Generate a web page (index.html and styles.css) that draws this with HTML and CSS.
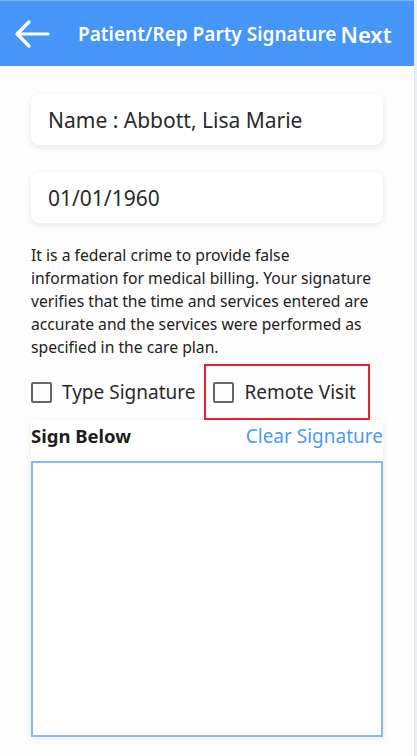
FILE: index.html
```html
<!DOCTYPE html>
<html>
<head>
<meta charset="utf-8">
<link rel="stylesheet" href="styles.css">
</head>
<body>
<div class="app">
  <header class="topbar">
    <svg class="back" width="38" height="30" viewBox="0 0 38 30"><path d="M35 15H4M16 3L4 15l12 12" fill="none" stroke="#fff" stroke-width="3.2" stroke-linecap="round" stroke-linejoin="round"/></svg>
    <span class="title">Patient/Rep Party Signature</span>
    <span class="next">Next</span>
  </header>
  <main class="content">
    <div class="card">Name : Abbott, Lisa Marie</div>
    <div class="card">01/01/1960</div>
    <p class="notice">It is a federal crime to provide false information for medical billing. Your signature verifies that the time and services entered are accurate and the services were performed as specified in the care plan.</p>
    <div class="checks">
      <label class="check"><span class="box"></span>Type Signature</label>
      <label class="check remote"><span class="box"></span>Remote Visit</label>
    </div>
    <section class="sign">
      <div class="sign-head"><span class="sign-title">Sign Below</span><span class="clear">Clear Signature</span></div>
      <div class="pad"></div>
    </section>
  </main>
</div>
<div class="edge"></div>
</body>
</html>
```
FILE: styles.css
```css
html, body { margin: 0; padding: 0; }
body {
  width: 417px;
  height: 756px;
  overflow: hidden;
  display: flex;
  background: #fdfdfd;
  font-family: "Noto Sans", sans-serif;
  color: #222;
}
.app { width: 414px; flex: none; }
.edge { flex: 1; background: #e9eff5; border-left: 1px solid #dfe8f1; }
.topbar {
  height: 66px;
  background: #4596f8;
  display: flex;
  align-items: center;
  color: #fff;
  box-sizing: border-box;
  border-top: 1px solid #7fb6fb;
}
.back { margin-left: 13px; flex: none; }
.title { margin-left: 27px; font-size: 19px; font-weight: 600; }
.next { margin-left: 4px; font-size: 22px; font-weight: 600; }
.content { padding: 28px 31px 0 31px; }
.card {
  height: 51px;
  background: #fff;
  border-radius: 8px;
  box-shadow: 0 2px 6px rgba(0,0,0,0.09);
  display: flex;
  align-items: center;
  padding-left: 17px;
  font-size: 21px;
  color: #2a2a2a;
  margin-bottom: 27px;
}
.notice {
  margin: 0;
  width: 346px;
  font-size: 15.7px;
  line-height: 23px;
  color: #222;
  margin-top: -6px;
}
.checks { display: flex; align-items: center; margin-top: 5px; height: 56px; }
.check { display: flex; align-items: center; font-size: 19px; color: #2a2a2a; }
.box {
  width: 17px; height: 17px;
  border: 2px solid #666;
  border-radius: 2px;
  margin-right: 10px;
}
.remote {
  margin-left: 9px;
  border: 2px solid #e8222c;
  height: 52px;
  padding: 0 12px 0 7px;
}
.sign {
  background: #fff;
  box-shadow: 0 2px 8px rgba(0,0,0,0.07);
}
.sign-head {
  display: flex;
  justify-content: space-between;
  align-items: flex-start;
  height: 41px;
  padding-top: 3px;
  box-sizing: border-box;
}
.sign-title { font-size: 18.5px; font-weight: 700; color: #1e1e1e; }
.clear { font-size: 19px; color: #4a9af8; }
.pad { height: 272px; border: 2px solid #86b9f8; }
```
